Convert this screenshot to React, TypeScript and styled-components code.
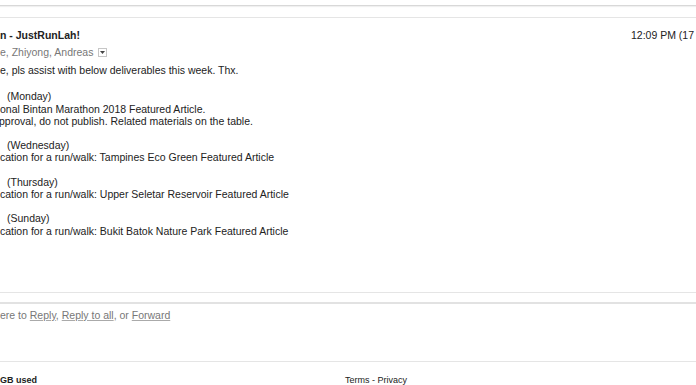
import React from "react";
import styled, { createGlobalStyle } from "styled-components";

const Global = createGlobalStyle`
  html, body { margin: 0; padding: 0; background: #fff; }
  body { width: 696px; height: 385px; overflow: hidden; font-family: "Liberation Sans", Arial, sans-serif; }
`;

const Page = styled.div`
  width: 696px;
  height: 385px;
  overflow: hidden;
  color: #222;
  font-size: 10.5px;
`;

const TopShadow = styled.div`
  height: 5px;
  border-bottom: 1px solid #d8d8d8;
  box-shadow: 0 1px 1px rgba(0, 0, 0, 0.06);
  margin-bottom: 11px;
`;

const Rule = styled.div<{ $thick?: boolean; $color?: string }>`
  height: 0;
  border-top: ${(p) => (p.$thick ? 2 : 1)}px solid ${(p) => p.$color || "#e5e5e5"};
`;

const Gap = styled.div<{ $h: number }>`
  height: ${(p) => p.$h}px;
`;

const Header = styled.div`
  display: flex;
  justify-content: space-between;
  align-items: baseline;
  padding-top: 11px;
  white-space: nowrap;
`;

const Subject = styled.div`
  font-weight: bold;
  font-size: 10.5px;
  color: #222;
`;

const Time = styled.div`
  font-size: 10.5px;
  color: #222;
  margin-right: -60px;
  width: 125px;
`;

const Recipients = styled.div`
  display: flex;
  align-items: center;
  gap: 5px;
  margin-top: 5px;
  color: #777;
  white-space: nowrap;
`;

const DropBox = styled.span`
  width: 9px;
  height: 9px;
  border: 1px solid #c6c6c6;
  box-sizing: border-box;
  display: inline-flex;
  align-items: center;
  justify-content: center;
  background: #fff;
`;

const Body = styled.div`
  margin-top: 6px;
  line-height: 12.2px;
  white-space: nowrap;
  height: 228px;
`;

const Intro = styled.div`
  min-height: 12.2px;
  margin-bottom: 2px;
`;

const Line = styled.div<{ $indent?: number }>`
  padding-left: ${(p) => (p.$indent && p.$indent > 0 ? p.$indent : 0)}px;
  margin-left: ${(p) => (p.$indent && p.$indent < 0 ? p.$indent : 0)}px;
  min-height: 12.2px;
`;

const ReplyArea = styled.div`
  height: 57px;
  padding-top: 5px;
  box-sizing: border-box;
  color: #777;
  white-space: nowrap;
`;

const ReplyLink = styled.a`
  color: #777;
  text-decoration: underline;
  text-decoration-color: #aaa;
`;

const Footer = styled.div`
  display: flex;
  padding-top: 13px;
  font-size: 9px;
  white-space: nowrap;
`;

const Usage = styled.div`
  font-weight: bold;
  width: 345px;
  color: #222;
`;

const Links = styled.div`
  color: #222;
`;

export default function App() {
  return (
    <>
      <Global />
      <Page>
        <TopShadow />
        <Rule />
        <Header>
          <Subject>n - JustRunLah!</Subject>
          <Time>12:09 PM (17 hours ago)</Time>
        </Header>
        <Recipients>
          <span>e, Zhiyong, Andreas</span>
          <DropBox>
            <svg width="5" height="3" viewBox="0 0 5 3">
              <path d="M0 0 L5 0 L2.5 3 Z" fill="#444" />
            </svg>
          </DropBox>
        </Recipients>
        <Body>
          <Intro>e, pls assist with below deliverables this week. Thx.</Intro>
          <Line />
          <Line $indent={7}>(Monday)</Line>
          <Line>onal Bintan Marathon 2018 Featured Article.</Line>
          <Line $indent={-1}>pproval, do not publish. Related materials on the table.</Line>
          <Line />
          <Line $indent={7}>(Wednesday)</Line>
          <Line>cation for a run/walk: Tampines Eco Green Featured Article</Line>
          <Line />
          <Line $indent={7}>(Thursday)</Line>
          <Line>cation for a run/walk: Upper Seletar Reservoir Featured Article</Line>
          <Line />
          <Line $indent={7}>(Sunday)</Line>
          <Line>cation for a run/walk: Bukit Batok Nature Park Featured Article</Line>
        </Body>
        <Rule />
        <Gap $h={9} />
        <Rule $thick $color="#e2e2e2" />
        <ReplyArea>
          ere to <ReplyLink>Reply</ReplyLink>, <ReplyLink>Reply to all</ReplyLink>, or{" "}
          <ReplyLink>Forward</ReplyLink>
        </ReplyArea>
        <Rule />
        <Footer>
          <Usage>GB used</Usage>
          <Links>Terms - Privacy</Links>
        </Footer>
      </Page>
    </>
  );
}
